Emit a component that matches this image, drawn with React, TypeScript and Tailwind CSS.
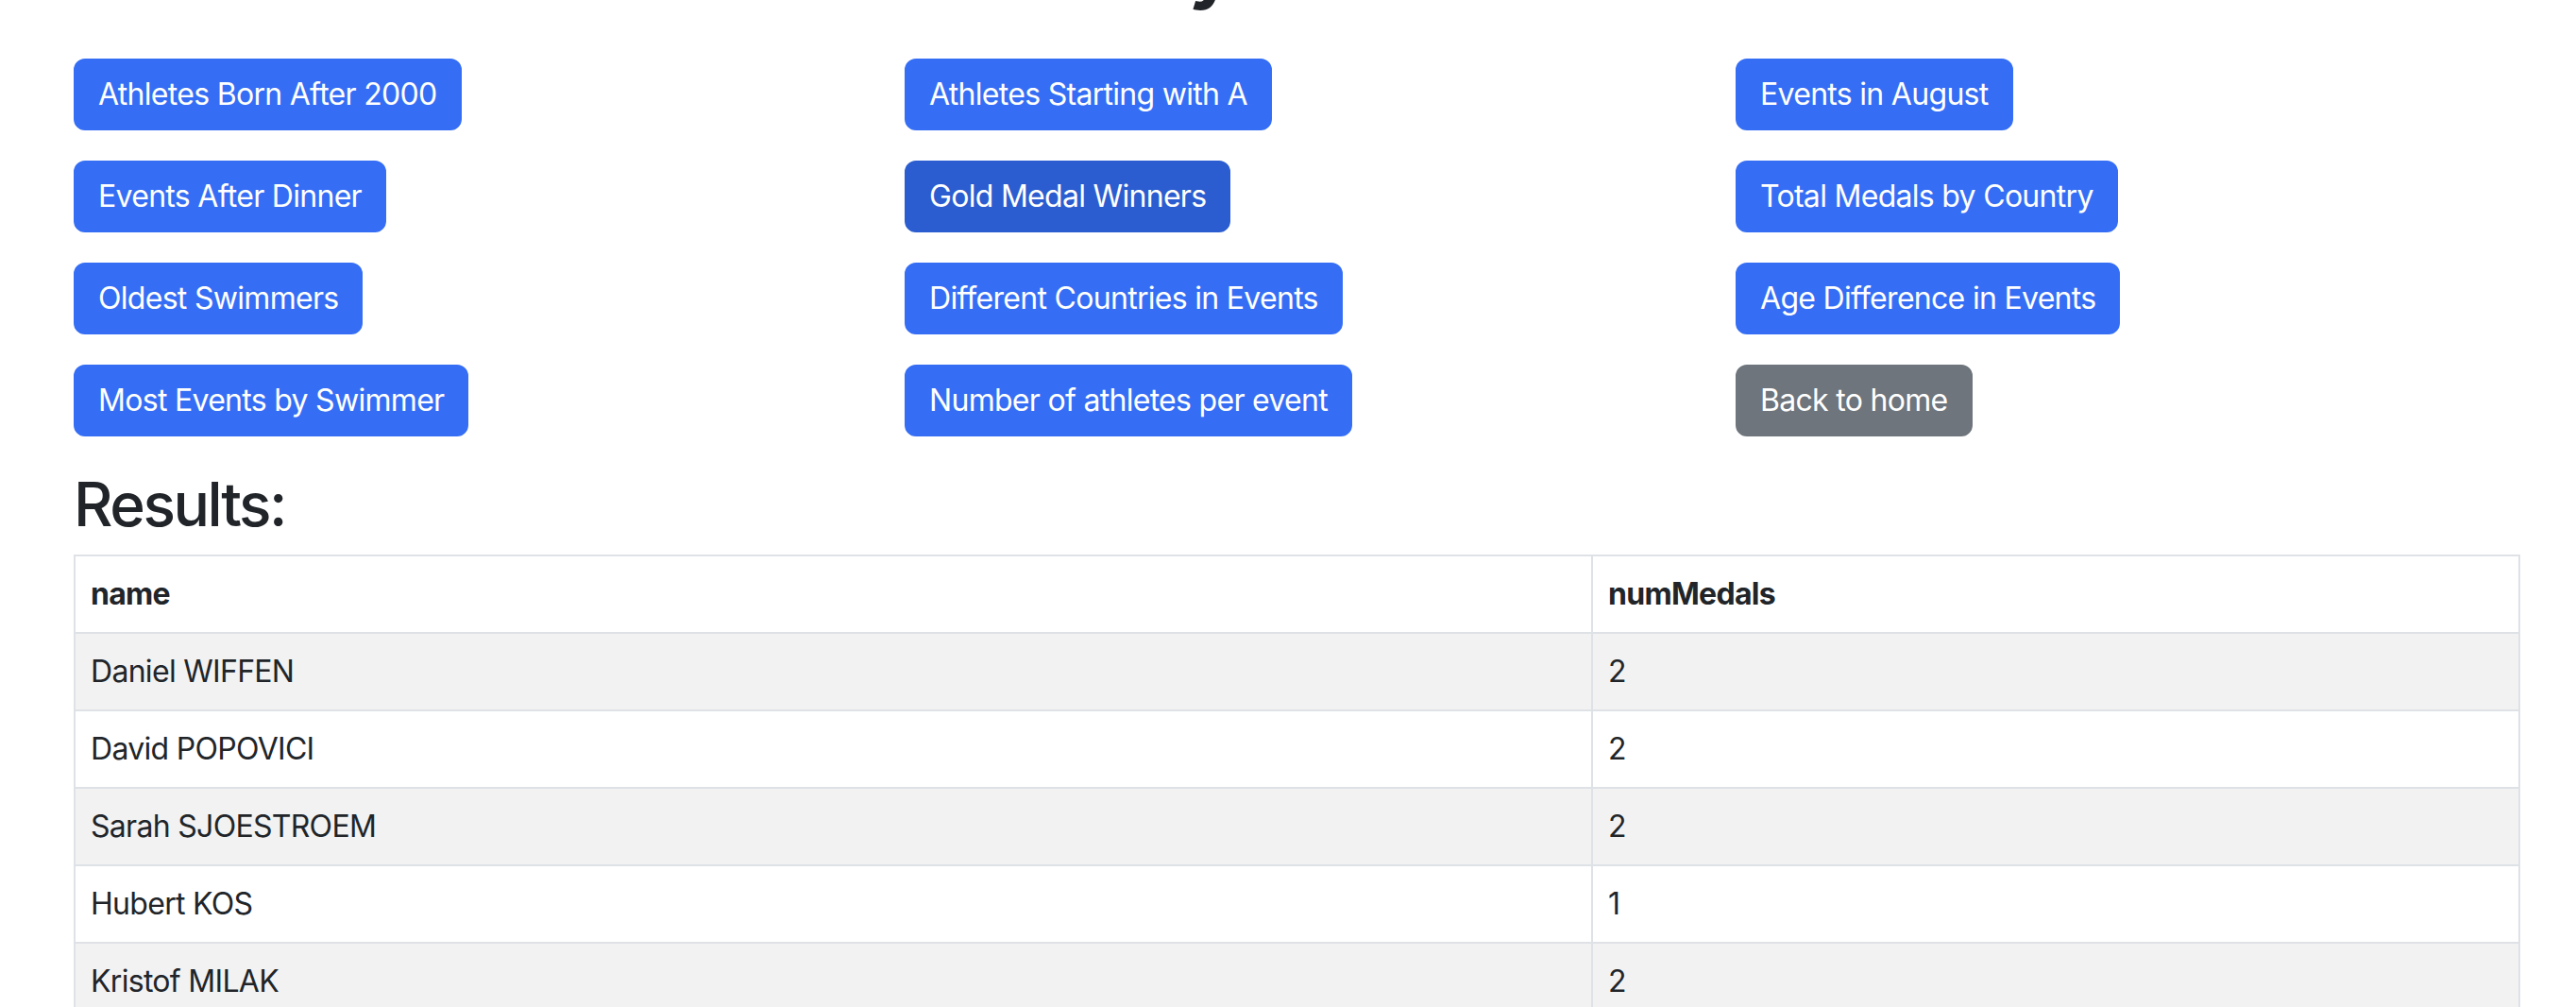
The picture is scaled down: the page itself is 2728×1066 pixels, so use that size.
import React from "react";

type Row = { name: string; numMedals: number };

const queries: { label: string; variant?: "active" | "secondary" }[] = [
  { label: "Athletes Born After 2000" },
  { label: "Athletes Starting with A" },
  { label: "Events in August" },
  { label: "Events After Dinner" },
  { label: "Gold Medal Winners", variant: "active" },
  { label: "Total Medals by Country" },
  { label: "Oldest Swimmers" },
  { label: "Different Countries in Events" },
  { label: "Age Difference in Events" },
  { label: "Most Events by Swimmer" },
  { label: "Number of athletes per event" },
  { label: "Back to home", variant: "secondary" },
];

const rows: Row[] = [
  { name: "Daniel WIFFEN", numMedals: 2 },
  { name: "David POPOVICI", numMedals: 2 },
  { name: "Sarah SJOESTROEM", numMedals: 2 },
  { name: "Hubert KOS", numMedals: 1 },
  { name: "Kristof MILAK", numMedals: 2 },
];

function QueryButton({ label, variant }: { label: string; variant?: "active" | "secondary" }) {
  const color =
    variant === "active"
      ? "bg-[#2b5dd0] border-[#2b5dd0]"
      : variant === "secondary"
        ? "bg-[#6e757c] border-[#6e757c]"
        : "bg-[#356ef5] border-[#356ef5]";
  return (
    <div>
      <button
        className={`${color} border-2 rounded-[12px] px-[24px] py-[12px] text-[32px] leading-[48px] tracking-[-0.7px] text-white whitespace-nowrap`}
      >
        {label}
      </button>
    </div>
  );
}

export default function App() {
  return (
    <div className="min-h-screen bg-white text-[#212529] font-['Inter','Liberation_Sans',sans-serif] overflow-hidden">
      <div className="ml-[78px] w-[2591px]">
        <h1 className="mt-[-83px] mb-[49px] text-center text-[80px] leading-[96px] font-bold tracking-[-1.5px]">
          Query Selection
        </h1>

        <div className="grid grid-cols-[repeat(3,833px)] gap-x-[47px] gap-y-[32px]">
          {queries.map((q) => (
            <QueryButton key={q.label} label={q.label} variant={q.variant} />
          ))}
        </div>

        <h2 className="mt-[33px] mb-[15px] text-[64px] leading-[77px] font-medium tracking-[-2.4px]">
          Results:
        </h2>

        <table className="w-full border-collapse border-2 border-[#dee2e6] text-[32px] leading-[48px] tracking-[-0.7px]">
          <thead>
            <tr>
              <th className="w-[1607px] border-2 border-[#dee2e6] p-[16px] text-left font-bold">name</th>
              <th className="border-2 border-[#dee2e6] p-[16px] text-left font-bold">numMedals</th>
            </tr>
          </thead>
          <tbody>
            {rows.map((r, i) => (
              <tr key={r.name} className={i % 2 === 0 ? "bg-[#f2f2f2]" : "bg-white"}>
                <td className="border-2 border-[#dee2e6] p-[16px]">{r.name}</td>
                <td className="border-2 border-[#dee2e6] p-[16px]">{r.numMedals}</td>
              </tr>
            ))}
          </tbody>
        </table>
      </div>
    </div>
  );
}
